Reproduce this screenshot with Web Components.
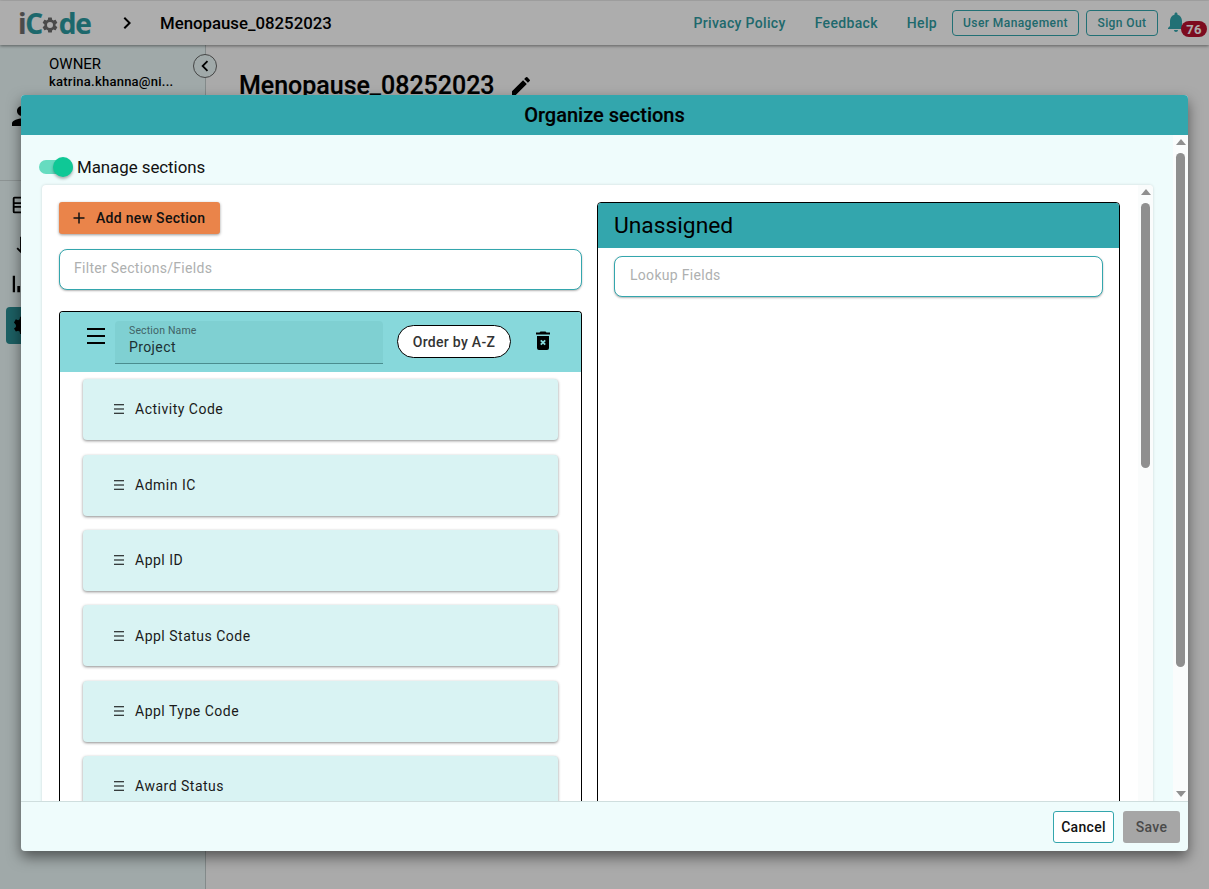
<!DOCTYPE html>
<html><head><meta charset="utf-8">
<style>
html,body{margin:0;padding:0;height:100%;overflow:hidden}
body{font-family:Roboto,"Liberation Sans",sans-serif;background:#fbfbfb}
</style></head><body>
<app-shell>
  <organize-dialog>
    <section-panel name="Project">
      <field-card>Activity Code</field-card>
      <field-card>Admin IC</field-card>
      <field-card>Appl ID</field-card>
      <field-card>Appl Status Code</field-card>
      <field-card>Appl Type Code</field-card>
      <field-card>Award Status</field-card>
    </section-panel>
  </organize-dialog>
</app-shell>
<script>
const def=(n,html)=>customElements.define(n,class extends HTMLElement{
  constructor(){super();this.attachShadow({mode:'open'}).innerHTML=html}
  connectedCallback(){if(this.getAttribute('name')){const e=this.shadowRoot.querySelector('[data-name]');if(e)e.textContent=this.getAttribute('name')}}
});

def('app-logo',`<style>
:host{display:flex;align-items:center;font-family:"Open Sans",Lato,sans-serif;font-size:28px;font-weight:700;color:#2b9a9f;line-height:1;letter-spacing:-1.300px;width:74px;-webkit-text-stroke:.2px}
.i{color:#6e6e6e}svg{width:18px;height:18px;margin:4px 0 0 -1px;flex:none}
</style><span class="i">i</span><span>C</span><svg viewBox="0 0 24 24"><path fill="#6e6e6e" d="M19.400 13c.04-.33.06-.66.06-1s-.02-.67-.06-1l2.100-1.650c.2-.15.25-.42.12-.64l-2-3.460c-.12-.22-.39-.3-.61-.22l-2.490 1c-.52-.4-1.080-.73-1.690-.98l-.38-2.650A.49.49 0 0 0 14 2h-4c-.25 0-.46.18-.49.42l-.38 2.650c-.61.25-1.170.59-1.690.98l-2.490-1c-.23-.09-.49 0-.61.22l-2 3.460c-.13.22-.07.49.12.64L4.560 11c-.04.33-.07.66-.07 1s.03.67.07 1l-2.110 1.650c-.19.15-.25.42-.12.64l2 3.460c.12.22.39.3.61.22l2.490-1c.52.4 1.080.73 1.690.98l.38 2.650c.03.24.24.42.49.42h4c.25 0 .46-.18.49-.42l.38-2.650c.61-.25 1.170-.59 1.690-.98l2.490 1c.23.09.49 0 .61-.22l2-3.460c.12-.22.07-.49-.12-.64L19.400 13zM12 16a4 4 0 1 1 0-8 4 4 0 0 1 0 8z"/></svg><span>de</span>`);

def('top-bar',`<style>
:host{display:flex;align-items:center;height:44px;margin-top:1px;background:#fff;box-shadow:0 1px 3px rgba(0,0,0,.45);padding:0 2px 0 18px;position:relative;z-index:2;font-family:Roboto,sans-serif}
.chev{width:24px;height:24px;margin-left:23px;flex:none}
.title{font-size:16.800px;font-weight:500;color:#000;margin-left:21px;flex:1}
a{font-size:14px;font-weight:500;color:#2f9ba1;letter-spacing:.33px;margin-right:29px;white-space:nowrap}
a.h{margin-right:15px}
button{font:500 12px Roboto,sans-serif;letter-spacing:.42px;color:#2f9ba1;background:transparent;border:1px solid #33a6ad;border-radius:4px;height:26px;padding:0;margin-right:7px;box-sizing:border-box}
.um{width:127px}.so{width:72px}
.bell{position:relative;width:22px;height:24px;margin-left:1px;margin-right:19px;flex:none}
.bell svg{width:24px;height:24px;position:absolute;left:-2px;top:-1px}
.bell b{position:absolute;left:15px;top:10px;width:26px;height:16px;border-radius:8px;background:#b9112f;color:#fff;font:700 13px/17px Roboto,sans-serif;text-align:center;letter-spacing:.3px}
</style>
<app-logo></app-logo>
<svg class="chev" viewBox="0 0 24 24"><path fill="#000" d="M10 6 8.590 7.410 13.170 12l-4.580 4.590L10 18l6-6z"/></svg>
<span class="title">Menopause_08252023</span>
<a>Privacy Policy</a><a>Feedback</a><a class="h">Help</a>
<button class="um">User Management</button><button class="so">Sign Out</button>
<div class="bell"><svg viewBox="0 0 24 24"><path fill="#33a6ad" d="M12 22c1.100 0 2-.9 2-2h-4c0 1.100.9 2 2 2zm6-6v-5c0-3.070-1.640-5.640-4.500-6.320V4c0-.83-.67-1.500-1.500-1.500s-1.500.67-1.500 1.500v.68C7.630 5.360 6 7.920 6 11v5l-2 2v1h16v-1l-2-2z"/></svg><b>76</b></div>`);

def('side-bar',`<style>
:host{display:block;width:205px;flex:none;background:#ecfafa;border-right:1px solid #c2cccc;position:relative;font-family:Roboto,sans-serif;color:#000;box-sizing:content-box}
.who{padding:10px 0 0 49px;height:136px;border-bottom:1px solid #cfd9d9;box-sizing:border-box;position:relative}
.o{font-size:15px;line-height:18px}.m{font-size:13px;line-height:17px;letter-spacing:.25px;font-weight:500}
.p{position:absolute;left:7px;top:56px;width:30px;height:30px}
.t{position:absolute;right:-12px;top:9px;width:22px;height:22px;border-radius:50%;border:1px solid #666;background:#ecfafa;display:flex;align-items:center;justify-content:center;z-index:1}
.t svg{width:22px;height:22px}
nav{display:flex;flex-direction:column;padding:4px 0 0 6px}
nav div{height:40px;width:38px;display:flex;align-items:center;box-sizing:border-box;flex:none}
nav div.on{background:#2a8d92;border-radius:4px;width:60px;height:37px;margin-top:2px}
nav svg{width:22px;height:22px;margin-left:4px}
</style>
<div class="who"><div class="o">OWNER</div><div class="m">katrina.khanna@ni...</div>
<svg class="p" viewBox="0 0 24 24"><path d="M12 12c2.210 0 4-1.790 4-4s-1.790-4-4-4-4 1.790-4 4 1.790 4 4 4zm0 2c-2.670 0-8 1.340-8 4v2h16v-2c0-2.660-5.330-4-8-4z"/></svg>
<span class="t"><svg viewBox="0 0 24 24"><path d="M15.410 7.410 14 6l-6 6 6 6 1.410-1.410L10.830 12z"/></svg></span></div>
<nav>
<div><svg viewBox="0 0 24 24"><path d="M19 3H5a2 2 0 0 0-2 2v14a2 2 0 0 0 2 2h14a2 2 0 0 0 2-2V5a2 2 0 0 0-2-2zM5 5h14v4H5zm0 6h14v2H5zm0 4h14v4H5z"/></svg></div>
<div><svg viewBox="0 0 24 24"><path d="M11 3h2v14.200l2.500-2.500 1.400 1.400L12 21l-4.900-4.900 1.400-1.400 2.500 2.500z"/></svg></div>
<div><svg viewBox="0 0 24 24"><path d="M3 2h2.500v18H3zM8 13h3v7H8zM13 9h3v11h-3z"/></svg></div>
<div class="on"><svg viewBox="0 0 24 24"><path d="M19.400 13a7 7 0 0 0 0-2l2.100-1.650-2-3.460-2.490 1a7 7 0 0 0-1.690-.98L14.940 2h-4l-.38 2.650a7 7 0 0 0-1.690.98l-2.490-1-2 3.460L6.500 11a7 7 0 0 0 0 2l-2.100 1.650 2 3.460 2.490-1a7 7 0 0 0 1.690.98l.38 2.650h4l.38-2.650a7 7 0 0 0 1.690-.98l2.490 1 2-3.460z"/></svg></div>
</nav>`);

def('app-shell',`<style>
:host{display:block;position:relative;width:1209px;height:889px;overflow:hidden;background:#fbfbfb;font-family:Roboto,sans-serif}
.col{display:flex;flex-direction:column;height:100%}
.row{display:flex;flex:1;min-height:0}
main{flex:1;padding:25px 0 0 33px}
h1{margin:0;font-size:25px;font-weight:500;line-height:32px;color:#000;display:flex;align-items:center;gap:15px;letter-spacing:-.02px;-webkit-text-stroke:.2px}
h1 svg{width:24px;height:24px;margin-left:-1px}
.scrim{position:absolute;inset:0;background:rgba(0,0,0,.32);z-index:5}
</style>
<div class="col"><top-bar></top-bar><div class="row"><side-bar></side-bar>
<main><h1>Menopause_08252023<svg viewBox="0 0 24 24"><path d="M3 17.250V21h3.750L17.810 9.940l-3.750-3.750L3 17.250zM20.710 7.040a1 1 0 0 0 0-1.410l-2.340-2.340a1 1 0 0 0-1.410 0l-1.830 1.830 3.750 3.750 1.830-1.830z"/></svg></h1></main></div></div>
<div class="scrim"></div><slot></slot>`);

def('scroll-rail',`<style>
:host{display:flex;flex-direction:column;align-items:center;width:15px;flex:none;background:#fafcfc;box-sizing:border-box;padding-top:4px;position:relative}
.a{width:0;height:0;border-left:5px solid transparent;border-right:5px solid transparent;flex:none}
.u{border-bottom:6px solid #8f8f8f}
.d{border-top:6px solid #8f8f8f;position:absolute;bottom:4px}
.th{width:9px;border-radius:5px;background:#8f8f8f;margin-top:8px;flex:none;height:var(--thumb,100px)}
</style><span class="a u"></span><span class="th"></span><span class="a d"></span>`);

def('text-filter',`<style>
:host{display:block;box-sizing:border-box;height:41px;border:1px solid #33a6ad;border-radius:8px;background:#fff;box-shadow:0 1px 2px rgba(0,0,0,.3);padding:0 var(--pad,15px);font:400 14px/37px Roboto,sans-serif;letter-spacing:.3px;color:#aeb0b0}
</style><slot></slot>`);

def('field-card',`<style>
:host{display:flex;align-items:center;flex:none;box-sizing:border-box;height:61px;padding-bottom:.6px;background:#d9f3f3;border-radius:4px;box-shadow:0 1px 3px rgba(0,0,0,.45);padding-left:30px;font:400 14px Roboto,sans-serif;letter-spacing:.5px;color:#1a1a1a}
svg{width:12px;height:12px;margin-right:10px;flex:none}
</style><svg viewBox="0 0 12 12"><path stroke="#000" stroke-width="1.100" d="M1 1.800h10M1 6h10M1 10.200h10"/></svg><slot></slot>`);

def('section-panel',`<style>
:host{display:block;border:1px solid #000;border-bottom:0;border-radius:4px 4px 0 0;background:#fff}
.h{height:60px;background:#87d8db;display:flex;align-items:flex-start;border-radius:3px 3px 0 0}
.menu{width:20px;height:20px;margin:14px 0 0 26px;flex:none}
.f{width:268px;height:43px;margin:9px 0 0 9px;background:#7fd0d2;border-bottom:1px solid #4a8d8f;box-sizing:border-box;border-radius:4px 4px 0 0;padding:4px 14px;flex:none;color:#1c3033}
.f small{display:block;font-size:10.500px;line-height:12px;color:#3f6366;letter-spacing:.15px}
.f span{display:block;font-size:14px;line-height:21px;letter-spacing:.4px}
.o{width:114px;height:33px;margin:13px 0 0 14px;border:1px solid #000;border-radius:17px;background:#fff;font:500 14px Roboto,sans-serif;letter-spacing:.3px;color:#333;flex:none;box-sizing:border-box;padding:0}
.t{width:24px;height:24px;margin:17px 0 0 20px;flex:none}
.l{display:flex;flex-direction:column;gap:14.400px;padding:7.200px 23px 30px}
</style>
<div class="h"><svg class="menu" viewBox="0 0 20 20"><path stroke="#000" stroke-width="2" d="M1 3h18M1 10h18M1 17h18"/></svg>
<div class="f"><small>Section Name</small><span data-name></span></div>
<button class="o">Order by A-Z</button>
<svg class="t" viewBox="0 0 24 24"><path d="M15.500 3.500 14.500 2.500h-5l-1 1H5v2h14v-2zM6 7v12a2 2 0 0 0 2 2h8a2 2 0 0 0 2-2V7z"/><path stroke="#87d8db" stroke-width="1.800" d="m9.800 11.300 4.400 4.400m0-4.400-4.400 4.400"/></svg></div>
<div class="l"><slot></slot></div>`);

def('unassigned-panel',`<style>
:host{display:block;border:1px solid #000;border-radius:4px 4px 0 0;background:#fff;height:900px;box-sizing:border-box}
.h{height:45px;background:#33a6ad;font:400 22.800px/45px Roboto,sans-serif;padding-left:16px;color:#000;border-radius:3px 3px 0 0}
.b{padding:8px 16px}
</style><div class="h">Unassigned</div><div class="b"><text-filter>Lookup Fields</text-filter></div>`);

def('organize-dialog',`<style>
:host{position:absolute;left:21px;top:95px;width:1167px;height:756px;z-index:6;display:flex;flex-direction:column;background:#effcfc;border-radius:4px;box-shadow:0 6px 14px rgba(0,0,0,.5);overflow:hidden;font-family:Roboto,sans-serif}
header{height:40px;flex:none;background:#33a6ad;text-align:center;font:500 20px/40px Roboto,sans-serif;color:#000;-webkit-text-stroke:.15px}
.mid{flex:1;min-height:0;display:flex}
.content{flex:1;min-width:0;overflow:hidden;padding:0 20px 0 21px}
.tog{display:flex;align-items:center;height:50px;padding-top:14px;box-sizing:border-box;font-size:16.900px;letter-spacing:-.05px;color:#111;margin-left:-3px}
.sw{position:relative;width:34px;height:14px;border-radius:7px;background:#66dcc0;margin-right:4px;margin-top:-1px;flex:none}
.sw i{position:absolute;right:0;top:-3px;width:20px;height:20px;border-radius:50%;background:#0fc896;box-shadow:0 2px 3px rgba(0,0,0,.3)}
.card{background:#fff;border-radius:4px;box-shadow:0 0 3px rgba(0,0,0,.15);display:flex;height:700px;overflow:hidden}
.cols{flex:1;min-width:0;display:grid;grid-template-columns:523px 523px;column-gap:15px;padding:17px 0 0 17px;align-content:start}
.left{display:flex;flex-direction:column;--pad:14px}
.add{display:flex;align-items:center;width:161px;height:32px;background:#ea844a;border:0;border-radius:3px;box-shadow:0 1px 3px rgba(0,0,0,.4);font:500 14px Roboto,sans-serif;letter-spacing:.3px;color:#111;padding:0 0 0 12px;margin-bottom:15px;box-sizing:border-box}
.add svg{width:16px;height:16px;margin-right:9px}
.gap{height:21px}
footer{height:50px;flex:none;border-top:1px solid #cfdede;box-sizing:border-box;display:flex;align-items:center;justify-content:flex-end;gap:9px;padding:0 8px 0 0}
footer button{height:32px;border-radius:3px;font:500 14px Roboto,sans-serif;letter-spacing:.3px;box-sizing:border-box;padding:0}
.c{width:61px;background:#fff;border:1px solid #33a6ad;color:#111}
.s{width:57px;background:#a6a6a6;border:0;color:#4a4a4a}
scroll-rail.in{--thumb:265px}scroll-rail.out{--thumb:514px}
</style>
<header>Organize sections</header>
<div class="mid"><div class="content">
<div class="tog"><span class="sw"><i></i></span>Manage sections</div>
<div class="card"><div class="cols"><div class="left">
<button class="add"><svg viewBox="0 0 16 16"><path stroke="#111" stroke-width="1.500" d="M8 2.500v11M2.500 8h11"/></svg>Add new Section</button>
<text-filter>Filter Sections/Fields</text-filter><div class="gap"></div><slot></slot></div>
<unassigned-panel></unassigned-panel></div><scroll-rail class="in"></scroll-rail></div>
</div><scroll-rail class="out"></scroll-rail></div>
<footer><button class="c">Cancel</button><button class="s">Save</button></footer>`);
</script>
</body></html>
